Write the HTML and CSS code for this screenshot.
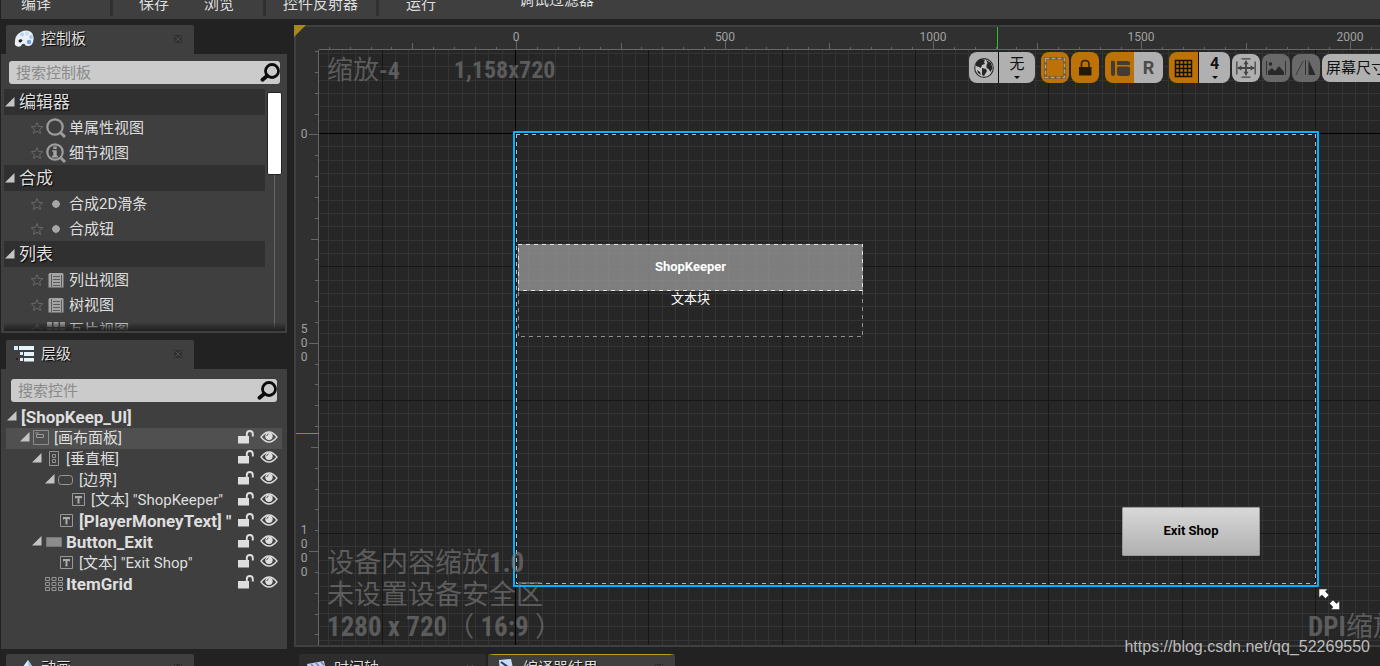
FILE: index.html
```html
<!DOCTYPE html>
<html lang="zh-CN">
<head>
<meta charset="utf-8">
<title>ShopKeep_UI</title>
<link rel="stylesheet" href="styles.css">
</head>
<body>
<svg class="defs" aria-hidden="true">
  <symbol id="star" viewBox="0 0 14 14"><path d="M7 1.5 8.6 5.4 12.8 5.7 9.6 8.4 10.6 12.5 7 10.2 3.4 12.5 4.4 8.4 1.2 5.7 5.4 5.4Z" fill="none" stroke="#686868"/></symbol>
  <symbol id="glass" viewBox="0 0 20 20"><circle cx="12" cy="8" r="6.5" fill="none" stroke="#0c0c0c" stroke-width="2.8"/><path d="M7.3 12.8 2.5 16.800" stroke="#0c0c0c" stroke-width="3.800" stroke-linecap="round"/></symbol>
  <symbol id="prop" viewBox="0 0 20 20"><circle cx="9" cy="9" r="7.7" fill="none" stroke="#9c9c9c" stroke-width="2.2"/><path d="m14 14 5 5" stroke="#9c9c9c" stroke-width="3"/></symbol>
  <symbol id="detail" viewBox="0 0 20 20"><circle cx="9" cy="9" r="7.7" fill="none" stroke="#9c9c9c" stroke-width="2.2"/><path d="m14 14 5 5" stroke="#9c9c9c" stroke-width="3"/><path d="M7.300 3.5h3.400v2.600H7.300zM6.200 7.3h4.500v5.500h1.200v1.700H6v-1.700h1.300v-4H6.200z" fill="#a4a4a4"/></symbol>
  <symbol id="dot" viewBox="0 0 20 20"><path d="m10 5.8 2.8 1.4L14.2 10l-1.4 2.8L10 14.2l-2.8-1.4L5.800 10l1.400-2.800z" fill="#a6a6a6"/></symbol>
  <symbol id="list" viewBox="0 0 20 20"><path d="M4 3h12q1.500 0 1.500 1.500V17.500h-15V4.500Q2.500 3 4 3Z" fill="#a4a4a4"/><path d="M5.500 4v13M15.500 5v12M7 6.500h7M7 9.500h7M7 12.500h7M7 15.500h7" stroke="#5c5c5c"/></symbol>
  <symbol id="tiles" viewBox="0 0 20 20"><path d="M1 2h5v5H1zM7.500 2h5v5h-5zM14 2h5v5h-5zM1 8.500h5v5H1zM7.500 8.500h5v5h-5zM14 8.500h5v5h-5z" fill="#a0a0a0"/></symbol>
  <symbol id="arrow" viewBox="0 0 10 10"><path d="M9.500 0v9.500H0z" fill="#c4c4c4"/></symbol>
  <symbol id="lock" viewBox="0 0 16 14"><path d="M0 6h11v7.500H0z" fill="#dedede"/><path d="M8.800 6V4q0-3 3-3t3 3v2.500" fill="none" stroke="#dedede" stroke-width="1.900"/></symbol>
  <symbol id="eye" viewBox="0 0 18 12"><path d="M1 6Q9-4 17 6 9 16 1 6Z" fill="none" stroke="#dedede" stroke-width="1.300"/><circle cx="9" cy="5.200" r="3.700" fill="#dedede"/><path d="M6.800 5q.2-1.800 1.800-2" stroke="#555" fill="none"/></symbol>
  <symbol id="close" viewBox="0 0 8 8"><path d="M0 0h8v8H0z" fill="#303030"/><path d="m1 1 6 6M7 1 1 7" stroke="#505050"/></symbol>
  <symbol id="wCanvas" viewBox="0 0 20 16"><path d="M1.500.5h15v14h-15z" fill="none" stroke="#8c8c8c"/><path d="M4.500 4.500h7v3h-7zM3 3h4" fill="none" stroke="#999"/></symbol>
  <symbol id="wVert" viewBox="0 0 20 16"><path d="M5.500.5h9v14h-9zM8.500 3.500h3v3h-3zM8.500 8.500h3v3h-3z" fill="none" stroke="#959595"/></symbol>
  <symbol id="wBorder" viewBox="0 0 20 16"><rect x="1.500" y="3.500" width="14" height="9" rx="3" fill="none" stroke="#999"/></symbol>
  <symbol id="wText" viewBox="0 0 20 16"><path d="M3.500 1.500h12v12h-12z" fill="none" stroke="#999"/><path d="M6 4h7v2.500h-1V6h-1.500v5.500h-2V6H7v.5H6z" fill="#aaa"/></symbol>
  <symbol id="wButton" viewBox="0 0 20 16"><path d="M2.500 3.500h15v9h-15z" fill="#8c8c8c" stroke="#777"/></symbol>
  <symbol id="wGrid" viewBox="0 0 20 16"><path d="M1.500 1.500h4v3h-4zM8 1.500h4v3H8zM14.500 1.500h4v3h-4zM1.500 6.500h4v3h-4zM8 6.500h4v3H8zM14.500 6.500h4v3h-4zM1.500 11.500h4v3h-4zM8 11.500h4v3H8zM14.500 11.500h4v3h-4z" fill="none" stroke="#969696"/></symbol>
</svg>

<header class="toolbar">
  <div class="tool-group compile"><button>编译</button></div>
  <div class="tool-group files"><button>保存</button><button>浏览</button></div>
  <div class="tool-group reflect"><button>控件反射器</button></div>
  <div class="tool-group play"><button>运行</button><span class="filter-label">调试过滤器</span></div>
</header>

<main class="workspace">
  <aside class="sidebar">
    <div class="tab">
      <svg class="tab-icon" viewBox="0 0 20 18"><path d="M1 15Q0 6 6 2.500 11-1 17 2q4 3 2 10-1 4-5 4-3 0-3.500-2Q8 13 7 16q-3 2-6-1Z" fill="#e9f0f8"/><circle cx="8" cy="4.500" r="2" fill="#b7d2f2"/><circle cx="13" cy="3.500" r="2" fill="#c8dcf4"/><circle cx="17" cy="7" r="1.900" fill="#a9c9f0"/><circle cx="15" cy="12" r="2.200" fill="#6f9fe0"/><path d="M4.500 11q0-1.700 2-1.700t2 1.200Q8 12 6.500 12.500T4.500 11Z" fill="#222"/></svg>
      <span>控制板</span>
      <button class="tab-close" aria-label="关闭控制板"><svg><use href="#close"/></svg></button>
    </div>
    <section class="panel palette">
      <div class="search"><input type="text" placeholder="搜索控制板" aria-label="搜索控制板"><svg><use href="#glass"/></svg></div>
      <div class="palette-body">
        <div class="palette-list">
          <h2><svg><use href="#arrow"/></svg>编辑器</h2>
          <div class="item"><svg class="star"><use href="#star"/></svg><svg class="kind"><use href="#prop"/></svg>单属性视图</div>
          <div class="item"><svg class="star"><use href="#star"/></svg><svg class="kind"><use href="#detail"/></svg>细节视图</div>
          <h2><svg><use href="#arrow"/></svg>合成</h2>
          <div class="item"><svg class="star"><use href="#star"/></svg><svg class="kind"><use href="#dot"/></svg>合成2D滑条</div>
          <div class="item"><svg class="star"><use href="#star"/></svg><svg class="kind"><use href="#dot"/></svg>合成钮</div>
          <h2><svg><use href="#arrow"/></svg>列表</h2>
          <div class="item"><svg class="star"><use href="#star"/></svg><svg class="kind"><use href="#list"/></svg>列出视图</div>
          <div class="item"><svg class="star"><use href="#star"/></svg><svg class="kind"><use href="#list"/></svg>树视图</div>
          <div class="item"><svg class="star"><use href="#star"/></svg><svg class="kind"><use href="#tiles"/></svg>瓦片视图</div>
        </div>
        <div class="scrollbar"><div class="thumb"></div><div class="track"></div></div>
      </div>
    </section>

    <div class="tab second">
      <svg class="tab-icon" viewBox="0 0 20 18"><path d="M0 1h4v4H0zM6 7h3v3H6zM6 13h3v3H6z" fill="#d7eef8"/><path d="M5 1h15v4H5zM10 7h10v4H10zM10 13h10v3.500H10z" fill="#e4f4fa"/><path d="M2 13h2v2H2z" fill="#222"/></svg>
      <span>层级</span>
      <button class="tab-close" aria-label="关闭层级"><svg><use href="#close"/></svg></button>
    </div>
    <section class="panel hierarchy">
      <div class="search"><input type="text" placeholder="搜索控件" aria-label="搜索控件"><svg><use href="#glass"/></svg></div>
      <div class="tree">
        <div class="row root"><svg class="arrow"><use href="#arrow"/></svg><b>[ShopKeep_UI]</b></div>
        <div class="row d1 selected"><svg class="arrow"><use href="#arrow"/></svg><svg class="widget"><use href="#wCanvas"/></svg><span>[画布面板]</span><svg class="lock"><use href="#lock"/></svg><svg class="eye"><use href="#eye"/></svg></div>
        <div class="row d2"><svg class="arrow"><use href="#arrow"/></svg><svg class="widget"><use href="#wVert"/></svg><span>[垂直框]</span><svg class="lock"><use href="#lock"/></svg><svg class="eye"><use href="#eye"/></svg></div>
        <div class="row d3"><svg class="arrow"><use href="#arrow"/></svg><svg class="widget"><use href="#wBorder"/></svg><span>[边界]</span><svg class="lock"><use href="#lock"/></svg><svg class="eye"><use href="#eye"/></svg></div>
        <div class="row d4"><svg class="arrow"></svg><svg class="widget"><use href="#wText"/></svg><span>[文本] "ShopKeeper"</span><svg class="lock"><use href="#lock"/></svg><svg class="eye"><use href="#eye"/></svg></div>
        <div class="row d3"><svg class="arrow"></svg><svg class="widget"><use href="#wText"/></svg><b>[PlayerMoneyText] "</b><svg class="lock"><use href="#lock"/></svg><svg class="eye"><use href="#eye"/></svg></div>
        <div class="row d2"><svg class="arrow"><use href="#arrow"/></svg><svg class="widget"><use href="#wButton"/></svg><b>Button_Exit</b><svg class="lock"><use href="#lock"/></svg><svg class="eye"><use href="#eye"/></svg></div>
        <div class="row d3"><svg class="arrow"></svg><svg class="widget"><use href="#wText"/></svg><span>[文本] "Exit Shop"</span><svg class="lock"><use href="#lock"/></svg><svg class="eye"><use href="#eye"/></svg></div>
        <div class="row d2"><svg class="arrow"></svg><svg class="widget"><use href="#wGrid"/></svg><b>ItemGrid</b><svg class="lock"><use href="#lock"/></svg><svg class="eye"><use href="#eye"/></svg></div>
      </div>
    </section>

    <div class="dock">
      <div class="tab">
        <svg class="tab-icon" viewBox="0 0 20 18"><path d="M8 9 14 1l4 6-5 9-8-2z" fill="#d8eef8"/><path d="m14 1 4 6-3 5z" fill="#8fc3e0"/></svg>
        <span>动画</span>
        <button class="tab-close" aria-label="关闭动画"><svg><use href="#close"/></svg></button>
      </div>
    </div>
  </aside>

  <section class="center">
    <div class="viewport">
      <div class="ruler"></div>
      <svg class="ruler" id="rulerX"></svg>
      <svg class="ruler" id="rulerY"></svg>
      <div class="surface">
        <svg class="grid" id="grid"></svg>

        <div class="canvas-outline"><div class="canvas-dash">
          <svg class="dash"><rect x="0" y="0" width="100%" height="100%"/></svg>
        </div></div>
        <div class="vertical-box">
          <svg class="dash dim"><rect x="0" y="0" width="100%" height="100%"/></svg>
          <div class="border-box"><svg class="dash bright"><rect x="0" y="0" width="100%" height="100%"/></svg>ShopKeeper</div>
          <div class="text-block">文本块</div>
        </div>
        <button class="exit-button">Exit Shop</button>

        <div class="hud hud-top"><span>缩放<b>-4</b></span><b>1,158x720</b></div>
        <div class="hud hud-bottom"><span>设备内容缩放<b>1.0</b></span><span>未设置设备安全区</span><span class="ratio"><b>1280 x 720</b>（<b>&nbsp;16:9&nbsp;</b>）</span></div>
        <div class="hud hud-dpi"><b>DPI</b>缩放</div>

        <svg class="resize" viewBox="0 0 24 24"><path d="M2 2h8.500L8.500 4.500l3.500 3.500-3.500 3.500L5 8l-3 2.500zM22.500 22.500H14l2-2.500-3.500-3.500L16 13l3.500 3.500 3-2.500z" fill="#fff" stroke="#333" stroke-width=".6"/></svg>

        <div class="tools">
          <div class="seg"><button class="light w29" aria-label="本地化预览"><svg viewBox="0 0 22 22"><circle cx="11" cy="11" r="9.300" fill="#c4c4c4" stroke="#333" stroke-width="1.200"/><path d="M3 6q2-4 6-4l3 1-1 2 1 2-3 1-1 3-2-1-3-1zM9 11l4 1 1 2-3 5-2-1zM13 3l5 3 1.500 5-2 4-2-3-2-1V8l1-2zM4 13l3 2 1 3-3-2z" fill="#262626"/></svg></button><button class="light w36 pick">无</button></div>
          <button class="solo orange w28 after-seg" aria-label="显示虚线轮廓"><svg viewBox="0 0 22 22"><rect x="1.500" y="1.500" width="19" height="19" fill="none" stroke="#70542c" stroke-width="2.600"/><rect x="1.500" y="1.500" width="19" height="19" fill="none" stroke="#a8a294" stroke-width="1.400" stroke-dasharray="4 2"/></svg></button>
          <button class="solo orange w28" aria-label="遵守锁定"><svg viewBox="0 0 22 22"><path d="M5 10h12.500v8.500H5z" fill="#241a08"/><path d="M7.500 11V7q0-3.500 3.700-3.500T15 7v4" fill="none" stroke="#33230b" stroke-width="1.600"/></svg></button>
          <div class="seg spaced"><button class="orange w29" aria-label="布局"><svg viewBox="0 0 22 22"><path d="M2 4q3-1 4 1v12q0 2-2 2t-2-2zM8 4h10l3 1v3H8zM9 9.500h10q2 0 2 2V17q0 2-2 2h-8q-3 0-3-3v-5z" fill="#443c2c"/></svg></button><button class="light w29 letter">R</button></div>
          <div class="seg spaced"><button class="orange w29" aria-label="网格对齐"><svg viewBox="0 0 22 22"><path d="M2.500 3.500h16v16h-16zM6.500 3v17M10.500 3v17M14.500 3v17M2 7.500h17M2 11.500h17M2 15.500h17" fill="none" stroke="#150f04" stroke-width="1.500"/></svg></button><button class="light w31 pick num">4</button></div>
          <button class="solo small light w28" aria-label="缩放到合适"><svg viewBox="0 0 24 24"><path d="M2 5v14M22 5v14M7 2h10M7 22h10" stroke="#444" stroke-width="1.400"/><path d="M3 12h18M12 4v16" stroke="#444" stroke-width="2"/><path d="m3 12 4-3v6zM21 12l-4-3v6zM12 4 9 8h6zM12 20l-3-4h6z" fill="#444"/></svg></button>
          <button class="solo small gray w28" aria-label="背景图"><svg viewBox="0 0 22 22"><path d="M1.500 4v14M20.500 4v14" stroke="#333"/><path d="M3 18v-4l4-3 3 3 4-5 5 6v3z" fill="#292929"/><circle cx="5.500" cy="7" r="1.800" fill="#292929"/></svg></button>
          <button class="solo small gray w28" aria-label="镜像"><svg viewBox="0 0 22 22"><path d="M13.500 3v15h7z" fill="#292929"/><path d="M10.500 3v15" stroke="#333"/><path d="m1 18 7-14" stroke="#3a3a3a"/></svg></button>
          <button class="solo small light screen">屏幕尺寸</button>
        </div>
      </div>
    </div>
    <svg class="corner" viewBox="0 0 12 12"><path d="M0 0h12L0 12z" fill="#a88720"/></svg>
    <div class="dock">
      <div class="tab idle"><svg class="tab-icon" viewBox="0 0 20 18"><path d="M0 5 17 2l1 5-17 3zM3 9h14v8H3z" fill="#c6d3ee"/><path d="m4 5 3 3M9 4l3 3M14 3l3 3" stroke="#6f80ac" stroke-width="1.500"/></svg><span>时间轴</span><button class="tab-close" aria-label="关闭时间轴"><svg><use href="#close"/></svg></button></div>
      <div class="tab active"><svg class="tab-icon" viewBox="0 0 20 18"><path d="M3 1 15 0l3 14-14 3z" fill="#c9dcf6"/><path d="m5 3 7 5-3 4" fill="none" stroke="#253a66" stroke-width="2"/></svg><span>编译器结果</span><button class="tab-close" aria-label="关闭编译器结果"><svg><use href="#close"/></svg></button></div>
    </div>
    <a class="watermark" href="https://blog.csdn.net/qq_52269550">https://blog.csdn.net/qq_52269550</a>
  </section>
</main>
<script src="rulers.js"></script>
</body>
</html>
```
FILE: styles.css
```css
* { box-sizing: border-box; }
body {
  margin: 0;
  height: 100vh;
  overflow: hidden;
  display: flex;
  flex-direction: column;
  gap: 6px;
  background: #222;
  color: #dedede;
  font: 15px/20px Roboto, "Noto Sans CJK SC", sans-serif;
}
button {
  font: inherit;
  color: inherit;
  background: none;
  border: 0;
  padding: 0;
}
svg { display: block; flex: none; }
.defs { position: absolute; width: 0; height: 0; }

/* Top toolbar */
.toolbar {
  display: flex;
  height: 19px;
  flex: none;
  margin-left: 1px;
  background: #3f3f3f;
  overflow: hidden;
  text-shadow: 1px 1px 1px #000;
}
.tool-group { display: flex; height: 16px; line-height: 20px; white-space: nowrap; }
.tool-group + .tool-group { border-left: 3px solid #303030; }
.tool-group button { height: 20px; margin-top: -6px; }
.compile { width: 109px; padding-left: 20px; }
.files { width: 153px; padding-left: 26px; gap: 35px; }
.reflect { width: 113px; padding-left: 17px; }
.play { padding-left: 27px; gap: 83px; }
.filter-label { margin-top: -10px; text-shadow: none; }

/* Columns */
.workspace { flex: 1; min-height: 0; display: flex; gap: 7px; }
.sidebar { width: 286px; flex: none; margin-left: 1px; display: flex; flex-direction: column; min-height: 0; }
.center { flex: 1; min-width: 0; display: flex; flex-direction: column; position: relative; }

.tab {
  width: 188px;
  height: 29px;
  flex: none;
  margin-left: 5px;
  padding: 0 12px 2px 8px;
  display: flex;
  align-items: center;
  gap: 7px;
  background: #3f3f3f;
  border-radius: 2px 2px 0 0;
  text-shadow: 1px 1px 1px #000;
}
.tab.second { margin-top: 7px; }
.tab-icon { width: 20px; height: 18px; }
.tab-close { margin-left: auto; }
.tab-close svg { width: 8px; height: 8px; }
.dock { display: flex; gap: 2px; height: 12px; flex: none; overflow: hidden; }
.sidebar .dock { margin-top: 5px; }
.center .dock { margin-top: 7px; padding-left: 5px; }
.center .dock .tab { margin-left: 0; width: 187px; }
.tab.idle { background: #2d2d2d; }
.tab.active { background: linear-gradient(90deg, transparent, #b8a018 3% 97%, transparent) top / 100% 1px no-repeat #3f3f3f; }

.panel { background: #3f3f3f; display: flex; flex-direction: column; }
.search {
  display: flex;
  align-items: center;
  height: 23px;
  flex: none;
  padding: 0 0 0 7px;
  background: #cbcbcb;
  border-radius: 3px;
}
.search input {
  flex: 1;
  min-width: 0;
  border: 0;
  padding: 0;
  background: none;
  font: inherit;
  color: #222;
  outline: 0;
}
.search input::placeholder { color: #8a8a8a; opacity: 1; }
.search svg { width: 20px; height: 20px; }

/* Palette */
.palette { height: 279px; flex: none; padding: 7px 2px 2px 3px; }
.palette .search { margin: 0 5px; }
.palette-body { display: flex; gap: 2px; margin-top: 5px; flex: 1; min-height: 0; position: relative; }
.palette-body::after {
  content: "";
  position: absolute;
  left: 0;
  right: 0;
  bottom: 0;
  height: 9px;
  background: linear-gradient(transparent, #1e1e1e);
}
.palette-list { width: 261px; overflow: hidden; }
.palette-list h2 {
  margin: 0;
  height: 26px;
  display: flex;
  align-items: center;
  gap: 4px;
  padding-left: 1px;
  background: #303030;
  font-size: 17px;
  font-weight: 400;
  text-shadow: 1px 1px 1px #000;
}
.palette-list h2 svg { width: 10px; height: 10px; }
.item { height: 25px; display: flex; align-items: center; padding-left: 26px; }
.star { width: 14px; height: 14px; margin-right: 2px; }
.kind { width: 20px; height: 20px; margin-right: 3px; }
.scrollbar { width: 15px; padding-top: 3px; display: flex; flex-direction: column; align-items: center; }
.thumb { width: 15px; height: 83px; flex: none; background: #fff; border: 1px solid #222; border-radius: 2px; }
.track { width: 1px; flex: 1; background: #666; }

/* Hierarchy */
.hierarchy { flex: 1; min-height: 0; padding: 10px 5px 0; }
.hierarchy .search { margin: 0 5px; }
.tree { display: grid; grid-auto-rows: 1fr; height: 187px; margin-top: 5px; }
.row { display: flex; align-items: center; min-height: 0; padding-right: 4px; white-space: nowrap; }
.row.selected { background: #505050; }
.row.root { padding-left: 1px; gap: 4px; }
.row.d1 { padding-left: 14px; }
.row.d2 { padding-left: 26px; }
.row.d3 { padding-left: 39px; }
.row.d4 { padding-left: 51px; }
.row span, .row b { flex: 1; min-width: 0; overflow: hidden; }
.row b { font-size: 17px; }
.arrow { width: 10px; height: 10px; margin-bottom: 2px; }
.widget { width: 20px; height: 16px; margin: 0 2px; }
.lock { width: 16px; height: 14px; margin: 0 6px 3px 2px; }
.eye { width: 18px; height: 12px; margin-bottom: 3px; }

/* Designer */
.viewport {
  flex: 1;
  min-height: 0;
  position: relative;
  display: grid;
  grid-template: 23px 1fr / 23px 1fr;
  border: solid #3f3f3f;
  border-width: 2px 0 2px 2px;
  background: #303030;
  overflow: hidden;
}
.corner { position: absolute; left: 0; top: 0; width: 12px; height: 12px; }
.ruler { width: 100%; height: 100%; overflow: hidden; }
.ruler text { fill: #a0a0a0; font: 12px Roboto, sans-serif; text-anchor: middle; }
.ruler .tick, .ruler .edge { fill: #666; }
.ruler .cursor { fill: #22c52a; }
.surface { position: relative; overflow: hidden; background: #262626; min-width: 0; }
.grid { position: absolute; inset: 0; width: 100%; height: 100%; }
.minor { fill: #343434; }
.major { fill: #161616; }
.origin { fill: #000; }

.dash { position: absolute; inset: 0; width: 100%; height: 100%; }
.dash rect { fill: none; stroke: #b8b8b8; stroke-width: 2px; stroke-dasharray: 4 4; }
.dash.dim rect { stroke: #909090; }
.dash.bright rect { stroke: #e2e2e2; }

.canvas-outline {
  position: absolute;
  left: 194px;
  top: 81px;
  width: 806px;
  height: 456px;
  border: 2px solid #00b4ff;
  border-radius: 1px;
  padding: 1px;
}
.canvas-dash { position: relative; height: 100%; }
.vertical-box {
  position: absolute;
  left: 199px;
  top: 194px;
  width: 345px;
  height: 93px;
  text-align: center;
  color: #fff;
  font-size: 13px;
  line-height: 16px;
}
.border-box {
  position: relative;
  height: 47px;
  display: flex;
  align-items: center;
  justify-content: center;
  padding-bottom: 2px;
  background: rgba(146, 146, 146, .82);
  font-weight: 700;
}
.text-block { position: relative; }
.exit-button {
  position: absolute;
  left: 803px;
  top: 457px;
  width: 138px;
  height: 49px;
  padding-bottom: 2px;
  border: 1px solid #999;
  border-radius: 1px;
  background: linear-gradient(#d8d8d8, #b0b0b0);
  color: #000;
  font-size: 13px;
  font-weight: 700;
}

.hud {
  position: absolute;
  color: rgba(128, 128, 128, .6);
  font: 400 27px/32px "Roboto Condensed", Roboto, "Noto Sans CJK SC", sans-serif;
  white-space: nowrap;
}
.hud-top { left: 8px; top: 4px; display: flex; gap: 54px; font-size: 26px; }
.hud-top b { font-size: 24px; }
.hud-bottom { left: 8px; bottom: 2px; display: flex; flex-direction: column; }
.hud-dpi { left: 989px; bottom: 2px; }
.resize { position: absolute; left: 998px; top: 537px; width: 24px; height: 24px; }

.tools { position: absolute; left: 650px; top: 2px; display: flex; align-items: center; gap: 2px; color: #111; }
.tools button { height: 31px; display: flex; align-items: center; justify-content: center; }
.tools svg { width: 22px; height: 22px; }
.seg { display: flex; border-radius: 8px; overflow: hidden; }
.seg button + .pick { border-left: 1px solid #111; }
.seg.spaced { margin-left: 4px; }
.tools .solo { border-radius: 8px; }
.after-seg { margin-left: 4px; }
.tools .small { height: 28px; }
.light { background: #b0b0b0; }
.orange { background: #bd7208; }
.gray { background: #696969; }
.w28 { width: 28px; }
.w29 { width: 29px; }
.w31 { width: 32px; }
.w36 { width: 37px; }
.tools .pick { flex-direction: column; justify-content: flex-start; line-height: 24px; }
.tools .pick::after { content: ""; border: solid transparent; border-width: 3px 3px 0; border-top-color: #111; }
.tools .num { font-size: 16px; font-weight: 700; }
.tools .letter { font-size: 18px; font-weight: 700; color: #4b4b4b; }
.tools .screen { padding: 0 8px 0 4px; white-space: nowrap; }

.watermark {
  position: absolute;
  right: 10px;
  bottom: 9px;
  color: #bdbdbd;
  text-decoration: none;
  font: 16px/20px "Liberation Sans", sans-serif;
}
```
FILE: rulers.js
```js
const NS = "http://www.w3.org/2000/svg";
const ORIGIN = { x: 197, y: 84 };   // canvas zero inside the surface
const TICK = 125 / 6;               // 50 units at zoom -4
const CELL = 40 / 3;                // one grid cell
const CURSOR = { x: 678, y: 383 };

function rect(svg, cls, x, y, w, h) {
  const r = document.createElementNS(NS, "rect");
  r.setAttribute("class", cls);
  r.setAttribute("x", x);
  r.setAttribute("y", y);
  r.setAttribute("width", w);
  r.setAttribute("height", h);
  svg.append(r);
}
function label(svg, text, x, y) {
  const t = document.createElementNS(NS, "text");
  t.setAttribute("x", x);
  t.setAttribute("y", y);
  t.textContent = text;
  svg.append(t);
}

function draw() {
  const rx = document.getElementById("rulerX");
  const ry = document.getElementById("rulerY");
  const grid = document.getElementById("grid");
  [rx, ry, grid].forEach(s => s.replaceChildren());
  const w = grid.clientWidth;
  const h = grid.clientHeight;

  rect(rx, "edge", 0, 22, w, 1);
  for (let i = -9; ORIGIN.x + i * TICK < w; i++) {
    const x = Math.ceil(ORIGIN.x + i * TICK);
    const len = i % 10 === 0 ? 8 : i % 5 === 0 ? 6 : 2;
    rect(rx, "tick", x, 22 - len, 1, len);
    if (i % 10 === 0) label(rx, i * 50, x, 14);
  }
  rect(rx, "cursor", CURSOR.x, 0, 1, 22);

  rect(ry, "edge", 22, 0, 1, h);
  for (let i = -4; ORIGIN.y + i * TICK < h; i++) {
    const y = Math.ceil(ORIGIN.y + i * TICK);
    const len = i % 10 === 0 ? 9 : i % 5 === 0 ? 7 : 3;
    rect(ry, "tick", 22 - len, y, len, 1);
    if (i % 10 === 0) {
      const digits = [...String(i * 50)];
      digits.forEach((d, n) => label(ry, d, 8, y + 4 + 14 * n - 7 * (digits.length - 1)));
    }
  }
  rect(ry, "cursor", 0, CURSOR.y, 23, 1);

  const lines = [];
  for (let i = -14; i * CELL + 196 < w; i++) lines.push([i, Math.round(196 + i * CELL), "v"]);
  for (let i = -6; i * CELL + 83 < h; i++) lines.push([i, Math.round(83 + i * CELL), "h"]);
  const kind = i => i === 0 ? "origin" : i % 10 === 0 ? "major" : "minor";
  for (const k of ["minor", "major", "origin"]) {
    for (const [i, p, dir] of lines) {
      if (kind(i) !== k) continue;
      if (dir === "v") rect(grid, k, p, 0, 1, h);
      else rect(grid, k, 0, p, w, 1);
    }
  }
}
draw();
window.addEventListener("resize", draw);
```
